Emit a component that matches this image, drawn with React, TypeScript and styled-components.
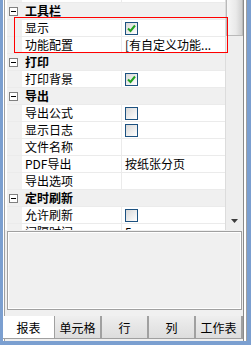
import React from 'react'
import styled, { createGlobalStyle } from 'styled-components'

/**********************************************************************/

const GlobalStyle = createGlobalStyle`
  html, body {
    margin: 0;
    padding: 0;
    background: #f0f0f0;
  }
  body {
    font-family: "Noto Sans CJK SC", "Noto Sans", sans-serif;
  }
`

const Frame = styled.div`
  width: 251px;
  height: 345px;
  box-sizing: border-box;
  border-left: 3px solid #7b9fd0;
  border-right: 4px solid #7b9fd0;
  border-bottom: 4px solid #7b9fd0;
  background: #f0f0f0;
  display: flex;
  flex-direction: column;
  overflow: hidden;
  font-size: 12px;
  color: #000;
`

const Shell = styled.div`
  flex: 1;
  display: flex;
  flex-direction: column;
  padding: 0 4px 0 2px;
  box-shadow: inset 1px 0 #fff, inset 2px 0 #a0a0a0, inset -1px 0 #a0a0a0,
    inset -3px 0 #fff, inset -4px 0 #8a8a8a;
`

const GridBox = styled.div`
  position: relative;
  display: flex;
  height: 230px;
  flex: none;
  border-left: 2px solid #fff;
`

const Grid = styled.div`
  width: 219px;
  box-sizing: border-box;
  border-right: 1px solid #dcdcdc;
  background: #fff;
  overflow: hidden;
`

const Rows = styled.div`
  margin-top: -14px;
`

const Row = styled.div<{ $category?: boolean }>`
  display: flex;
  height: 16px;
  line-height: 16px;
  border-bottom: 1px solid #ebebeb;
  background: ${(p) => (p.$category ? '#f0f0f0' : '#fff')};
  white-space: nowrap;
`

const Margin = styled.div`
  flex: none;
  width: 15px;
  display: flex;
  align-items: center;
  padding-left: 2px;
  box-sizing: border-box;
  background: #f0f0f0;
`

const CategoryLabel = styled.div`
  flex: 1;
  padding-left: 3px;
  font-weight: bold;
`

const Name = styled.div`
  flex: none;
  width: 100px;
  padding-left: 3px;
  box-sizing: border-box;
  border-right: 1px solid #ebebeb;
  overflow: hidden;
`

const Value = styled.div`
  flex: 1;
  min-width: 0;
  display: flex;
  align-items: center;
  padding-left: 3px;
  overflow: hidden;
  text-overflow: ellipsis;
`

const Check = styled.span`
  width: 13px;
  height: 13px;
  box-sizing: border-box;
  border: 1px solid #1c5180;
  background: linear-gradient(135deg, #d8d8d8, #fff);
  display: inline-flex;
  align-items: center;
  justify-content: center;
`

const Scrollbar = styled.div`
  width: 17px;
  display: flex;
  flex-direction: column;
  background: #eeeeee;
`

const Thumb = styled.div`
  height: 36px;
  box-sizing: border-box;
  border: 1px solid #b9b9b9;
  border-top: none;
  background: linear-gradient(to right, #f7f7f7, #e9e9e9 60%, #d0d0d0);
`

const Track = styled.div`
  flex: 1;
`

const ArrowButton = styled.div`
  height: 17px;
  display: flex;
  align-items: center;
  justify-content: center;
`

const Highlight = styled.div`
  position: absolute;
  left: 7px;
  top: 17px;
  width: 214px;
  height: 36px;
  box-sizing: border-box;
  border: 1px solid #f00;
  pointer-events: none;
`

const Description = styled.div`
  flex: none;
  height: 79px;
  margin: 1px 1px 0 2px;
  box-sizing: border-box;
  border: 1px solid #a0a0a0;
  box-shadow: inset 1px 1px #fff, inset -1px -1px #fff;
`

const TabStrip = styled.div`
  display: flex;
  height: 23px;
  margin: 6px 0 2px -2px;
`

const Tab = styled.div<{ $active?: boolean }>`
  flex: none;
  width: ${(p) => (p.$active ? 52 : 47)}px;
  box-sizing: border-box;
  display: flex;
  align-items: center;
  justify-content: center;
  background: ${(p) =>
    p.$active ? '#fff' : 'linear-gradient(#eeeeee, #dddddd)'};
  border-right: ${(p) => (p.$active ? 1 : 2)}px solid #a0a0a0;
  border-bottom: 1px solid #a0a0a0;
`

/**********************************************************************/

const Collapse = () => (
  <svg width="9" height="9" viewBox="0 0 9 9">
    <rect x="0.5" y="0.5" width="8" height="8" fill="#fff" stroke="#808080" />
    <path d="M2 4.5h5" stroke="#000" />
  </svg>
)

const Tick = () => (
  <svg width="9" height="9" viewBox="0 0 9 9">
    <path
      d="M1 4.5 L3.5 7 L8 1.5"
      fill="none"
      stroke="#21a121"
      strokeWidth="2"
    />
  </svg>
)

type Item =
  | { kind: 'category'; label: string }
  | { kind: 'prop'; name: string; value?: string; check?: boolean }

const items: Item[] = [
  { kind: 'prop', name: '' },
  { kind: 'category', label: '工具栏' },
  { kind: 'prop', name: '显示', check: true },
  { kind: 'prop', name: '功能配置', value: '[有自定义功能...' },
  { kind: 'category', label: '打印' },
  { kind: 'prop', name: '打印背景', check: true },
  { kind: 'category', label: '导出' },
  { kind: 'prop', name: '导出公式', check: false },
  { kind: 'prop', name: '显示日志', check: false },
  { kind: 'prop', name: '文件名称' },
  { kind: 'prop', name: 'PDF导出', value: '按纸张分页' },
  { kind: 'prop', name: '导出选项' },
  { kind: 'category', label: '定时刷新' },
  { kind: 'prop', name: '允许刷新', check: false },
  { kind: 'prop', name: '间隔时间', value: '5' },
]

const tabs = ['报表', '单元格', '行', '列', '工作表']

const App: React.FC = () => {
  return (
    <Frame>
      <GlobalStyle />
      <Shell>
        <GridBox>
          <Grid>
            <Rows>
              {items.map((item, i) =>
                item.kind === 'category' ? (
                  <Row key={i} $category>
                    <Margin>
                      <Collapse />
                    </Margin>
                    <CategoryLabel>{item.label}</CategoryLabel>
                  </Row>
                ) : (
                  <Row key={i}>
                    <Margin />
                    <Name>{item.name}</Name>
                    <Value>
                      {item.check !== undefined ? (
                        <Check>{item.check && <Tick />}</Check>
                      ) : (
                        item.value
                      )}
                    </Value>
                  </Row>
                )
              )}
            </Rows>
          </Grid>
          <Scrollbar>
            <Thumb />
            <Track />
            <ArrowButton>
              <svg width="7" height="5" viewBox="0 0 7 5">
                <path d="M0 0h7L3.5 4z" fill="#3c3c3c" />
              </svg>
            </ArrowButton>
          </Scrollbar>
          <Highlight />
        </GridBox>
        <Description />
        <TabStrip>
          {tabs.map((t, i) => (
            <Tab key={t} $active={i === 0}>
              {t}
            </Tab>
          ))}
        </TabStrip>
      </Shell>
    </Frame>
  )
}

export default App
